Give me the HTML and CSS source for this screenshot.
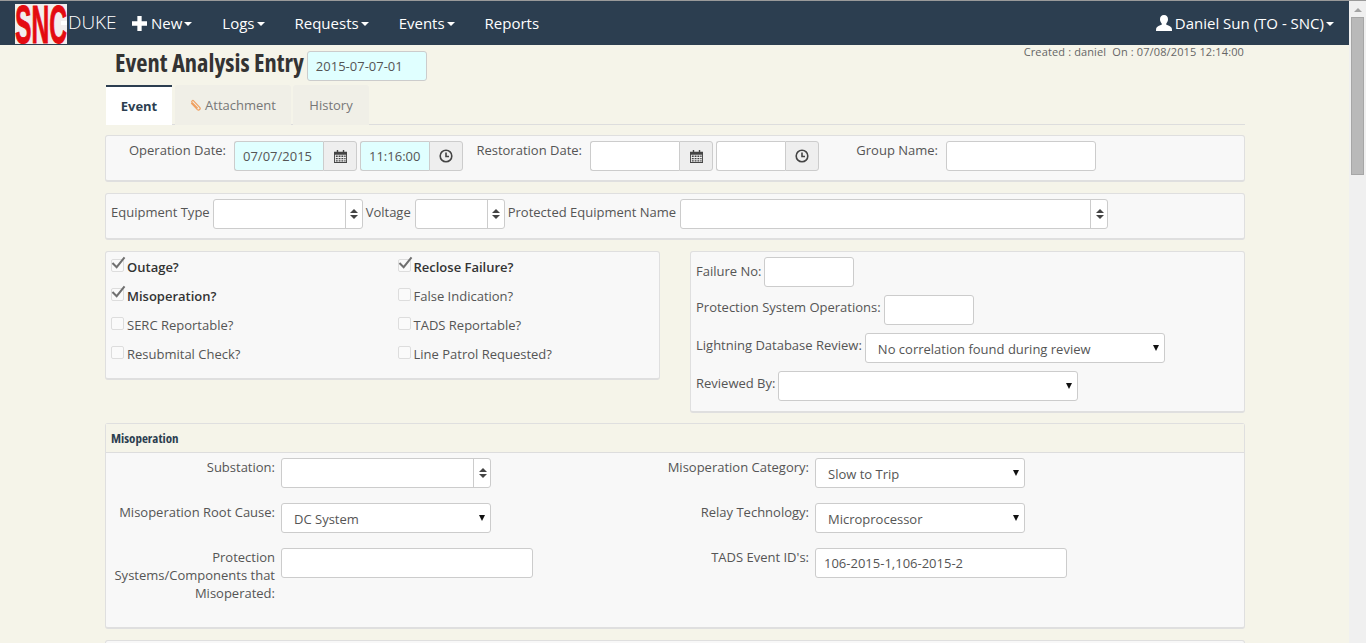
FILE: index.html
```html
<!DOCTYPE html>
<html lang="en">
<head>
<meta charset="utf-8">
<title>Event Analysis Entry</title>
<link rel="stylesheet" href="styles.css">
</head>
<body>
<div class="app">
<div class="viewport">
  <nav class="navbar">
    <div class="brand"><span class="logo"><svg class="logo-svg" viewBox="0 0 114 40" preserveAspectRatio="none"><text class="logo-text" x="0" y="39">SNC</text></svg><span class="logo-dash"></span></span><span class="brand-name">DUKE</span></div>
    <ul class="menu">
      <li class="menu-item"><svg class="icon-plus" viewBox="0 0 14 14"><path d="M5 0h4v5h5v4H9v5H5V9H0V5h5z"/></svg>New<i class="caret"></i></li>
      <li class="menu-item">Logs<i class="caret"></i></li>
      <li class="menu-item">Requests<i class="caret"></i></li>
      <li class="menu-item">Events<i class="caret"></i></li>
      <li class="menu-item">Reports</li>
    </ul>
    <div class="user"><svg class="icon-user" viewBox="0 0 16 16"><path d="M8 0c2.600 0 4 1.900 4 4.300 0 1.700-.7 3.200-1.700 4.100v1.300c1.800.7 4.900 1.700 5.400 3.200.2.700.3 1.800.3 3.100H0c0-1.300.1-2.400.3-3.100.5-1.500 3.600-2.500 5.400-3.200V8.400C4.700 7.500 4 6 4 4.300 4 1.900 5.400 0 8 0z"/></svg>Daniel Sun (TO - SNC)<i class="caret"></i></div>
  </nav>
  <main class="container">
    <header class="page-head">
      <h1 class="title">Event Analysis Entry</h1>
      <input class="input id-input" type="text" value="2015-07-07-01">
      <p class="created">Created : daniel&nbsp; On : 07/08/2015 12:14:00</p>
    </header>
    <div class="tabs">
      <a class="tab active">Event</a>
      <a class="tab tab-attach"><svg class="icon-clip" viewBox="0 0 12 12"><path d="M1.200 4.200L7.400 10.600c1.500 1.400 3.700-.8 2.300-2.300L3.600 1.800C2.700.9 1.100 2.400 2 3.400l5.600 5.800"/></svg>Attachment</a>
      <a class="tab tab-history">History</a>
    </div>

    <section class="panel panel-dates">
      <label class="lbl">Operation Date:</label>
      <div class="group g-date"><input class="input cyan" type="text" value="07/07/2015"><span class="addon"><svg class="icon-cal" viewBox="0 0 14 14"><path d="M3 0h1.500v2H9.500V0H11v2h3v12H0V2h3zM1 5v8h12V5zM2 6h2v1.500H2zM5 6h2v1.500H5zM8 6h2v1.500H8zM11 6h1.500v1.500H11zM2 8.500h2V10H2zM5 8.500h2V10H5zM8 8.500h2V10H8zM11 8.500h1.500V10H11zM2 11h2v1.300H2zM5 11h2v1.300H5zM8 11h2v1.300H8zM11 11h1.500v1.300H11z"/></svg></span></div>
      <div class="group g-time"><input class="input cyan" type="text" value="11:16:00"><span class="addon"><svg class="icon-clock" viewBox="0 0 14 14"><circle cx="7" cy="7" r="5.800"/><path d="M7 3.500V7.500H10"/></svg></span></div>
      <label class="lbl lbl-sm">Restoration Date:</label>
      <div class="group g-date"><input class="input" type="text"><span class="addon"><svg class="icon-cal" viewBox="0 0 14 14"><path d="M3 0h1.500v2H9.500V0H11v2h3v12H0V2h3zM1 5v8h12V5zM2 6h2v1.500H2zM5 6h2v1.500H5zM8 6h2v1.500H8zM11 6h1.500v1.500H11zM2 8.500h2V10H2zM5 8.500h2V10H5zM8 8.500h2V10H8zM11 8.500h1.500V10H11zM2 11h2v1.300H2zM5 11h2v1.300H5zM8 11h2v1.300H8zM11 11h1.500v1.300H11z"/></svg></span></div>
      <div class="group g-time"><input class="input" type="text"><span class="addon"><svg class="icon-clock" viewBox="0 0 14 14"><circle cx="7" cy="7" r="5.800"/><path d="M7 3.500V7.500H10"/></svg></span></div>
      <label class="lbl lbl-sm">Group Name:</label>
      <input class="input w-150" type="text">
    </section>

    <section class="panel panel-equip">
      <label class="lbl-inline">Equipment Type</label>
      <div class="combo w-150"><input class="input" type="text"><span class="combo-btn"><i class="sort"></i></span></div>
      <label class="lbl-inline lbl-wide">Voltage</label>
      <div class="combo w-90"><input class="input" type="text"><span class="combo-btn"><i class="sort"></i></span></div>
      <label class="lbl-inline lbl-wide">Protected Equipment Name</label>
      <div class="combo w-428"><input class="input" type="text"><span class="combo-btn"><i class="sort"></i></span></div>
    </section>

    <div class="split">
      <section class="panel panel-checks">
        <label class="check on"><span class="box"><svg viewBox="0 0 16 14"><path d="M1.500 7.500L6 12 14.500 1.500"/></svg></span>Outage?</label>
        <label class="check on"><span class="box"><svg viewBox="0 0 16 14"><path d="M1.500 7.500L6 12 14.500 1.500"/></svg></span>Reclose Failure?</label>
        <label class="check on"><span class="box"><svg viewBox="0 0 16 14"><path d="M1.500 7.500L6 12 14.500 1.500"/></svg></span>Misoperation?</label>
        <label class="check"><span class="box"></span>False Indication?</label>
        <label class="check"><span class="box"></span>SERC Reportable?</label>
        <label class="check"><span class="box"></span>TADS Reportable?</label>
        <label class="check"><span class="box"></span>Resubmital Check?</label>
        <label class="check"><span class="box"></span>Line Patrol Requested?</label>
      </section>
      <section class="panel panel-review">
        <div class="review-row"><label class="lbl-top lbl-first">Failure No:</label><input class="input w-90" type="text"></div>
        <div class="review-row"><label class="lbl-top">Protection System Operations:</label><input class="input w-90" type="text"></div>
        <div class="review-row"><label class="lbl-top">Lightning Database Review:</label><div class="select-wrap w-300"><select class="select"><option>No correlation found during review</option></select></div></div>
        <div class="review-row"><label class="lbl-top">Reviewed By:</label><div class="select-wrap w-300"><select class="select"><option></option></select></div></div>
      </section>
    </div>

    <section class="panel panel-misop">
      <h2 class="panel-title">Misoperation</h2>
      <div class="misop-grid">
        <label class="lbl-right">Substation:</label>
        <div class="combo w-210"><input class="input" type="text"><span class="combo-btn"><i class="sort"></i></span></div>
        <label class="lbl-right">Misoperation Category:</label>
        <div class="select-wrap w-210"><select class="select"><option>Slow to Trip</option></select></div>
        <label class="lbl-right">Misoperation Root Cause:</label>
        <div class="select-wrap w-210"><select class="select"><option>DC System</option></select></div>
        <label class="lbl-right">Relay Technology:</label>
        <div class="select-wrap w-210"><select class="select"><option>Microprocessor</option></select></div>
        <label class="lbl-right">Protection Systems/Components that Misoperated:</label>
        <input class="input w-252" type="text">
        <label class="lbl-right">TADS Event ID's:</label>
        <input class="input w-252" type="text" value="106-2015-1,106-2015-2">
      </div>
    </section>
    <section class="panel panel-next"></section>
  </main>
</div>
<aside class="scrollbar"><span class="sb-up"></span><span class="sb-thumb"></span></aside>
</div>
</body>
</html>
```
FILE: styles.css
```css
* { box-sizing: border-box; }
html, body { margin: 0; height: 643px; overflow: hidden; }
body { background: #f5f4e9; font: 13px/18px "Open Sans", sans-serif; color: #444; }
.app { display: flex; height: 643px; }
.viewport { flex: 1; min-width: 0; overflow: hidden; }
.scrollbar { width: 17px; background: #f0f0f0; display: flex; flex-direction: column; align-items: center; flex: none; border-top: 1px solid #9a9a9a; }
.sb-up { width: 0; height: 0; margin: 7px 0 5px; border: 4px solid transparent; border-top: 0; border-bottom: 4px solid #a3a3a3; }
.sb-thumb { width: 13px; height: 158px; background: #b9b9b9; border: 1px solid #a6a6a6; }

.navbar { height: 45px; display: flex; align-items: center; background: #2c3e50; color: #fff; border-top: 1px solid #9a9a9a; padding-left: 15px; padding-right: 15px; font-size: 15px; }
.brand { display: flex; align-items: center; width: 117px; flex: none; }
.logo { position: relative; width: 52px; height: 40px; margin-top: 2px; background: #f2eeee; flex: none; }
.logo-svg { display: block; width: 52px; height: 40px; overflow: visible; }
.logo-text { font: bold 54px "Liberation Sans", sans-serif; fill: #e40b10; stroke: #e40b10; stroke-width: 1; }
.logo-dash { position: absolute; right: 0; top: 17px; width: 6px; height: 4px; background: #fff; }
.brand-name { font-size: 19px; font-weight: 300; margin-left: 1px; margin-top: -3px; }
.menu { display: flex; gap: 30px; list-style: none; margin: 0; padding: 0; flex: 1; }
.menu-item { display: flex; align-items: center; white-space: nowrap; }
.caret { display: inline-block; width: 0; height: 0; margin-left: 2px; border: 4px solid transparent; border-top-color: #fff; border-bottom: 0; margin-top: 2px; }
.icon-plus { width: 15px; height: 15px; fill: #fff; margin-right: 4px; }
.icon-user { width: 16px; height: 16px; fill: #fff; margin-right: 3px; }
.user { display: flex; align-items: center; white-space: nowrap; font-size: 15px; }

.container { width: 1139px; margin-left: 106px; }
.page-head { height: 40px; display: flex; align-items: flex-start; position: relative; padding-left: 9px; }
.title { margin: 3px 3px 0 0; font: bold 24.500px/30px "Open Sans", sans-serif; font-stretch: 75%; color: #333; white-space: nowrap; }
.created { margin: 0 0 0 auto; font-size: 11px; line-height: 14px; letter-spacing: .13px; color: #666; padding-right: 1px; }

.input { display: block; height: 30px; padding: 0 8px; border: 1px solid #ccc; border-radius: 3px; background: #fff; font: 13px "Open Sans", sans-serif; color: #555; outline: 0; }
.cyan { background: #e0ffff; }
.id-input { width: 120px; margin-top: 6px; background: #e0ffff; }
.tabs { display: flex; height: 40px; border-bottom: 1px solid #ddd; gap: 3px; margin-bottom: 10px; }
.tab { display: flex; align-items: center; justify-content: center; height: 40px; background: #f0efe7; color: #777; border-radius: 3px 3px 0 0; }
.tab.active { width: 66px; background: #fff; color: #2c3e50; font-weight: 700; border-top: 2px solid #2c3e50; border-radius: 0; }
.tab-attach { width: 116px; }
.tab-history { width: 76px; margin-left: -1px; }
.icon-clip { width: 12px; height: 12px; fill: none; stroke: #f0a060; stroke-width: 1.200; margin-right: 3px; }

.panel { background: #f8f8f8; border: 1px solid #dfdfdf; border-bottom-width: 2px; border-radius: 3px; margin: 0 0 11px -1px; }
.panel-dates { height: 47px; display: flex; align-items: flex-start; padding-top: 5px; }
.lbl { width: 120px; margin-right: 8px; text-align: right; line-height: 18px; flex: none; color: #555; }
.lbl-sm { width: 119px; }
.group { display: flex; flex: none; }
.g-date { width: 123px; margin-right: 3px; }
.g-time { width: 103px; }
.group .input { flex: 1; min-width: 0; border-radius: 3px 0 0 3px; border-right: 0; }
.addon { width: 34px; height: 30px; flex: none; display: flex; align-items: center; justify-content: center; background: #eee; border: 1px solid #ccc; border-radius: 0 3px 3px 0; }
.icon-cal { width: 13px; height: 13px; fill: #444; fill-rule: evenodd; }
.icon-clock { width: 14px; height: 14px; fill: none; stroke: #444; stroke-width: 1.600; }

.panel-equip { height: 47px; display: flex; align-items: flex-start; padding: 5px 0 0 5px; gap: 3px; }
.lbl-inline { line-height: 26px; white-space: nowrap; flex: none; color: #555; }
.lbl-wide { margin-right: 1px; }
.combo { display: flex; flex: none; position: relative; }
.combo .input { flex: 1; min-width: 0; width: 100%; }
.combo-btn { position: absolute; right: 0; top: 0; width: 18px; height: 30px; border-left: 1px solid #ccc; display: flex; align-items: center; justify-content: center; }
.sort { display: block; width: 8px; height: 10px; position: relative; }
.sort::before, .sort::after { content: ""; position: absolute; left: 0; border: 4px solid transparent; }
.sort::before { top: 0; border-top: 0; border-bottom: 4px solid #444; }
.sort::after { bottom: 0; border-bottom: 0; border-top: 4px solid #444; }
.w-90 { width: 90px; flex: none; }
.w-150 { width: 150px; flex: none; }
.w-210 { width: 210px; flex: none; }
.w-252 { width: 252px; flex: none; }
.w-300 { width: 300px; flex: none; }
.w-428 { width: 428px; flex: none; }

.split { display: flex; justify-content: space-between; align-items: flex-start; margin-left: -1px; }
.split .panel { margin-left: 0; }
.panel-checks { width: 555px; height: 129px; display: grid; grid-template-columns: 286.500px 1fr; grid-auto-rows: 29px; padding: 0 0 0 5px; }
.check { display: flex; align-items: center; color: #555; white-space: nowrap; height: 29px; }
.check.on { color: #333; font-weight: 600; }
.box { position: relative; width: 13px; height: 13px; margin: -3px 3px 0 0; background: #fafafa; border: 1px solid #ddd; border-radius: 2px; flex: none; }
.box svg { position: absolute; left: -1px; top: -4px; width: 15px; height: 13px; fill: none; stroke: #707070; stroke-width: 2.200; }
.split .panel-review { width: 555px; height: 162px; padding: 5px 0 0 5px; margin-bottom: 10px; }
.review-row { display: flex; gap: 3px; align-items: flex-start; margin-bottom: 8px; }
.lbl-top { white-space: nowrap; line-height: 18px; padding-top: 3px; color: #555; }
.lbl-first { padding-top: 5px; }

.select-wrap { position: relative; }
.select-wrap::after { content: ""; position: absolute; right: 6px; top: 12px; border: 3px solid transparent; border-top: 6px solid #111; border-bottom: 0; pointer-events: none; }
.select { display: block; width: 100%; height: 30px; padding: 1px 12px 0; border: 1px solid #ccc; border-radius: 3px; background: #fff; font: 13px "Open Sans", sans-serif; color: #555; appearance: none; outline: 0; }

.panel-misop { height: 206px; }
.panel-title { margin: 0; height: 29px; padding-left: 5px; background: #f5f4e9; border-bottom: 1px solid #ddd; font: bold 13px/29px "Open Sans", sans-serif; font-stretch: 75%; color: #2c3e50; }
.misop-grid { display: grid; grid-template-columns: 169px 358px 164px 1fr; grid-auto-rows: 30px; row-gap: 15px; column-gap: 6px; padding-top: 5px; }
.misop-grid .lbl-right { text-align: right; padding-left: 7px; line-height: 18px; color: #555; }
.panel-next { height: 20px; margin-bottom: 0; }
```
